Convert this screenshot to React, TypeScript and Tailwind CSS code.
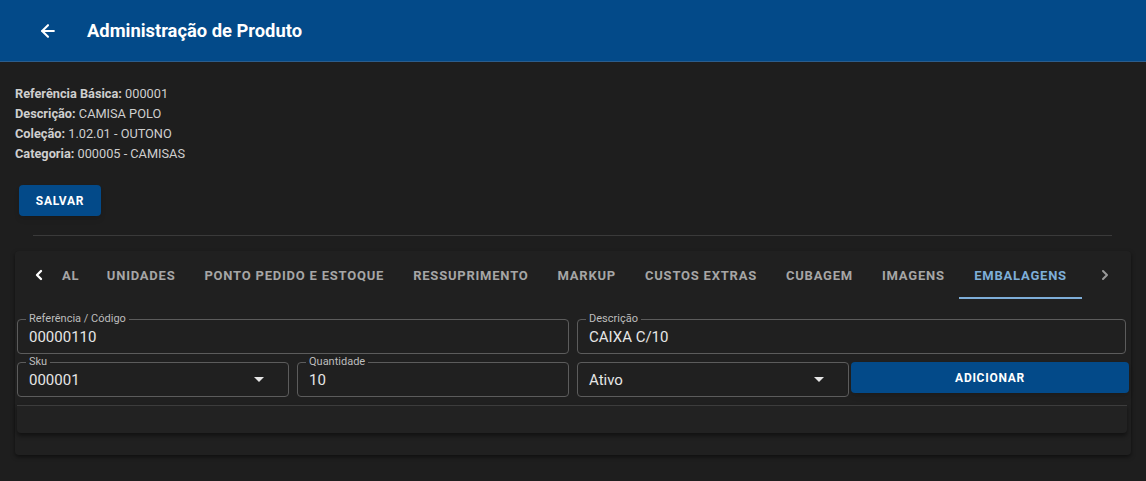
import { ArrowLeft, ChevronLeft, ChevronRight } from "lucide-react";

const tabs = [
  "UNIDADES",
  "PONTO PEDIDO E ESTOQUE",
  "RESSUPRIMENTO",
  "MARKUP",
  "CUSTOS EXTRAS",
  "CUBAGEM",
  "IMAGENS",
];

function Field({
  label,
  value,
  select,
  className = "",
}: {
  label: string;
  value: string;
  select?: boolean;
  className?: string;
}) {
  return (
    <div
      className={`relative h-[35px] rounded-[4px] border border-[#5c5c5c] flex items-center pl-[11px] pr-[14px] ${className}`}
    >
      {label && (
        <span className="absolute -top-[7px] left-[8px] px-[3px] bg-[#202020] text-[11px] leading-[12px] text-[#bdbdbd]">
          {label}
        </span>
      )}
      <span className="flex-1 text-[15px] text-[#e6e6e6] pt-[2px]">{value}</span>
      {select && (
        <span className="w-0 h-0 border-l-[5px] border-r-[5px] border-t-[5px] border-l-transparent border-r-transparent border-t-[#e6e6e6] mr-[10px]" />
      )}
    </div>
  );
}

export default function App() {
  return (
    <div className="min-h-screen bg-[#1e1e1e] font-['Roboto',sans-serif]">
      <header className="h-[62px] bg-[#034a89] border-b border-[#2c5d8c] flex items-center pl-[38px]">
        <ArrowLeft className="text-white" size={20} strokeWidth={2.5} />
        <h1 className="ml-[29px] text-[18.35px] font-bold text-white">
          Administração de Produto
        </h1>
      </header>

      <main className="px-[15px]">
        <div className="pt-[22px] text-[12.75px] leading-[20px] text-[#cfcfcf]">
          <p>
            <span className="font-bold">Referência Básica:</span> 000001
          </p>
          <p>
            <span className="font-bold">Descrição:</span> CAMISA POLO
          </p>
          <p>
            <span className="font-bold">Coleção:</span> 1.02.01 - OUTONO
          </p>
          <p>
            <span className="font-bold">Categoria:</span> 000005 - CAMISAS
          </p>
        </div>

        <button className="mt-[21px] ml-[4px] h-[31px] w-[82px] rounded-[4px] bg-[#034a89] text-white text-[12px] font-bold tracking-[0.06em] shadow-md">
          SALVAR
        </button>

        <div className="mt-[19px] ml-[18px] mr-[19px] border-t border-[#3a3a3a]" />

        <section className="mt-[15px] bg-[#202020] shadow-[0_2px_4px_rgba(0,0,0,0.5)] rounded-[4px] pb-[22px] px-[2px]">
          <div className="flex h-[48px] items-center pl-[2px] pr-[4px]">
            <button className="w-[40px] h-full flex items-center justify-center text-white">
              <ChevronLeft size={16} strokeWidth={3.5} />
            </button>
            <div className="flex-1 h-full overflow-hidden flex text-[13px] font-bold tracking-[0.06em] text-[#a6a6a6]">
              <div className="h-full flex items-center pl-[3px] pr-[13px] pt-[1px]">AL</div>
              {tabs.map((t) => (
                <div key={t} className="h-full flex items-center px-[14.5px] pt-[1px] whitespace-nowrap">
                  {t}
                </div>
              ))}
              <div className="h-full flex items-center px-[15px] text-[#7eaed8] border-b-2 border-[#7eaed8] pt-[3px]">
                EMBALAGENS
              </div>
            </div>
            <button className="w-[40px] h-full flex items-center justify-center text-[#9a9a9a]">
              <ChevronRight size={16} strokeWidth={3} />
            </button>
          </div>

          <div className="mt-[20px] grid grid-cols-4 gap-[8px]">
            <Field className="col-span-2" label="Referência / Código" value="00000110" />
            <Field className="col-span-2 mr-[3px]" label="Descrição" value="CAIXA C/10" />
            <Field label="Sku" value="000001" select />
            <Field label="Quantidade" value="10" />
            <Field label="" value="Ativo" select />
            <button className="h-[31px] -ml-[6px] rounded-[4px] bg-[#034a89] text-white text-[12px] font-bold tracking-[0.06em] shadow-md">
              ADICIONAR
            </button>
          </div>

          <div className="mt-[8px] mr-[2px] h-[28px] border-t border-[#3c3c3c] bg-[#222222] rounded-b-[4px] shadow-[0_3px_4px_rgba(0,0,0,0.45)]" />
        </section>
      </main>
    </div>
  );
}
